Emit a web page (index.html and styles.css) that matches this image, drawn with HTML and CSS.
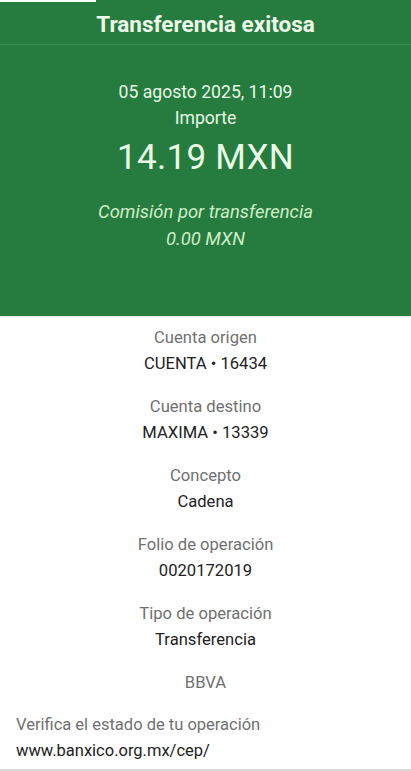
FILE: index.html
```html
<!DOCTYPE html>
<html lang="es">
<head>
<meta charset="utf-8">
<title>Transferencia exitosa</title>
<link rel="stylesheet" href="styles.css">
</head>
<body>
<div class="page">
  <header class="hero">
    <div class="topmark"></div>
    <h1 class="title">Transferencia exitosa</h1>
    <div class="divider"></div>
    <div class="summary">
      <p class="date">05 agosto 2025, 11:09</p>
      <p class="label-light">Importe</p>
      <p class="amount">14.19 MXN</p>
      <p class="fee">Comisión por transferencia</p>
      <p class="fee">0.00 MXN</p>
    </div>
  </header>
  <main class="details">
    <div class="item"><p class="k">Cuenta origen</p><p class="v">CUENTA • 16434</p></div>
    <div class="item"><p class="k">Cuenta destino</p><p class="v">MAXIMA • 13339</p></div>
    <div class="item"><p class="k">Concepto</p><p class="v">Cadena</p></div>
    <div class="item"><p class="k">Folio de operación</p><p class="v">0020172019</p></div>
    <div class="item"><p class="k">Tipo de operación</p><p class="v">Transferencia</p></div>
    <div class="item"><p class="k">BBVA</p></div>
  </main>
  <footer class="verify">
    <p class="k">Verifica el estado de tu operación</p>
    <p class="v">www.banxico.org.mx/cep/</p>
  </footer>
</div>
</body>
</html>
```
FILE: styles.css
```css
* { box-sizing: border-box; }
html, body { margin: 0; padding: 0; background: #ffffff; }
body { font-family: Roboto, "Noto Sans", sans-serif; width: 411px; height: 771px; overflow: hidden; }
p { margin: 0; }
.page { display: flex; flex-direction: column; height: 771px; }
.hero {
  position: relative;
  background: #267c3e;
  height: 316px;
  color: #eafbe6;
  text-align: center;
  box-shadow: 0 1px 1px rgba(0,0,0,0.08);
}
.topmark { position: absolute; left: 0; top: 0; width: 96px; height: 2px; background: #ffffff; }
.title { margin: 0; padding-top: 9px; font-size: 22.5px; font-weight: 700; line-height: 30px; height: 44px; color: #eefbe9; }
.divider { height: 1px; background: #3d8c52; }
.summary { padding-top: 34px; display: flex; flex-direction: column; align-items: center; }
.date { font-size: 17.6px; line-height: 26px; }
.label-light { font-size: 17.6px; line-height: 26px; }
.amount { font-size: 35px; line-height: 44px; margin-top: 5px; letter-spacing: 0.3px; }
.fee { font-size: 18.4px; font-style: italic; line-height: 27px; color: #cdeec6; }
.amount + .fee { margin-top: 18px; }
.details { display: flex; flex-direction: column; align-items: center; gap: 17px; padding-top: 9px; text-align: center; }
.item { display: flex; flex-direction: column; align-items: center; }
.k { font-size: 16.6px; line-height: 26px; color: #707070; }
.v { font-size: 16.6px; line-height: 26px; color: #222222; }
.verify { padding: 16px 16px 0; flex: 1; border-bottom: 2px solid #dcdcdc; }
.verify .k, .verify .v { font-size: 16.5px; }
```
